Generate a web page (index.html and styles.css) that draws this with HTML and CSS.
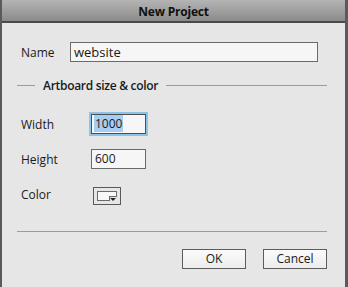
FILE: index.html
```html
<!DOCTYPE html>
<html>
<head>
<meta charset="utf-8">
<link rel="stylesheet" href="styles.css">
</head>
<body>
<div class="dialog">
  <div class="titlebar">New Project</div>
  <div class="content">
    <div class="row name-row">
      <span class="label">Name</span>
      <div class="field name-field">website</div>
    </div>
    <div class="section">
      <span class="line short"></span>
      <span class="section-title">Artboard size &amp; color</span>
      <span class="line long"></span>
    </div>
    <div class="row w-row">
      <span class="label">Width</span>
      <div class="field num focused"><span class="sel">1000</span></div>
    </div>
    <div class="row h-row">
      <span class="label">Height</span>
      <div class="field num">600</div>
    </div>
    <div class="row c-row">
      <span class="label">Color</span>
      <div class="swatch"><div class="swatch-inner"></div><span class="arrow"></span></div>
    </div>
    <div class="divider"></div>
    <div class="buttons">
      <div class="btn">OK</div>
      <div class="btn">Cancel</div>
    </div>
  </div>
</div>
</body>
</html>
```
FILE: styles.css
```css
html, body {
  margin: 0;
  padding: 0;
  background: #e5e5e5;
}
.dialog {
  width: 348px;
  height: 287px;
  box-sizing: border-box;
  border-left: 2px solid #5a5a5a;
  border-right: 3px solid #5a5a5a;
  background: #e6e6e6;
  font-family: "Open Sans", "Noto Sans", sans-serif;
  font-size: 12px;
  color: #1a1a1a;
  display: flex;
  flex-direction: column;
}
.titlebar {
  height: 21px;
  border-bottom: 2px solid #4a4a4a;
  background: linear-gradient(#b4b4b4, #8b8b8b);
  text-align: center;
  font-weight: 700;
  font-size: 12px;
  letter-spacing: -0.2px;
  line-height: 23px;
  color: #111;
}
.content {
  padding: 0 18px 0 13px;
  display: flex;
  flex-direction: column;
}
.row {
  display: flex;
  align-items: center;
}
.label {
  padding-left: 6px;
}
.name-row {
  margin-top: 19px;
}
.name-row .label {
  width: 49px;
}
.field {
  box-sizing: border-box;
  height: 20px;
  border: 1px solid #6a6a6a;
  background: #f6f6f6;
  line-height: 18px;
  padding-left: 3px;
}
.name-field {
  width: 248px;
  font-size: 13px;
}
.section {
  margin-top: 15px;
  display: flex;
  align-items: center;
  height: 16px;
}
.line {
  height: 1px;
  background: #9a9a9a;
}
.line.short {
  width: 18px;
  margin-left: 2px;
}
.section-title {
  font-weight: 600;
  letter-spacing: -0.3px;
  margin: 0 8px 0 8px;
}
.line.long {
  flex: 1;
  margin-right: 0;
}
.w-row { margin-top: 21px; }
.h-row { margin-top: 15px; }
.c-row { margin-top: 15px; }
.w-row .label, .h-row .label, .c-row .label { width: 70px; }
.num {
  width: 55px;
}
.focused {
  border: 1px solid #4f4f4f;
  box-shadow: 0 0 0 2px #8cc3e8;
}
.sel {
  background: #a9cdf0;
  padding: 0 1px;
  margin-left: -1px;
}
.swatch {
  position: relative;
  margin-left: 2px;
  margin-top: 3px;
  width: 28px;
  height: 18px;
  box-sizing: border-box;
  border: 1px solid #5a5a5a;
  padding: 3px;
}
.swatch-inner {
  width: 100%;
  height: 100%;
  box-sizing: border-box;
  border: 1px solid #6a6a6a;
  background: #f8f8f8;
}
.arrow {
  position: absolute;
  right: 3px;
  bottom: 3px;
  width: 8px;
  height: 5px;
  background: #e6e6e6;
  border-top: 1px solid #6a6a6a;
  border-left: 1px solid #6a6a6a;
  box-sizing: border-box;
}
.arrow::after {
  content: "";
  position: absolute;
  left: 0px;
  top: 1px;
  border-left: 3px solid transparent;
  border-right: 3px solid transparent;
  border-top: 3px solid #222;
}
.divider {
  margin-top: 26px;
  height: 1px;
  background: #9a9a9a;
  margin-left: 2px;
}
.buttons {
  margin-top: 17px;
  display: flex;
  justify-content: flex-end;
  gap: 17px;
}
.btn {
  width: 64px;
  height: 20px;
  box-sizing: border-box;
  border: 1px solid #5c5c5c;
  background: linear-gradient(#fbfbfb, #ececec);
  text-align: center;
  line-height: 18px;
  font-size: 12px;
}
```
